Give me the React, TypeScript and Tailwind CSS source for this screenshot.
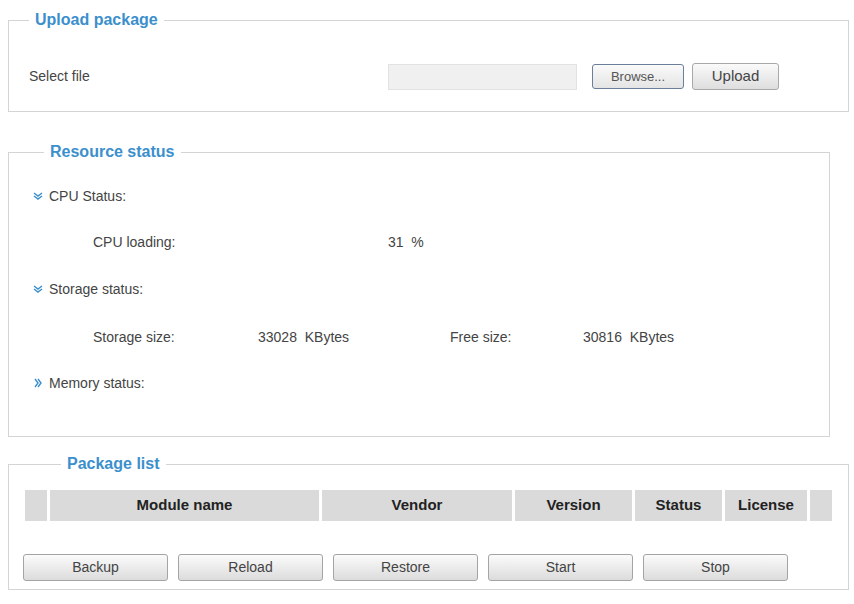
import React from 'react';

const BTNS = ['Backup', 'Reload', 'Restore', 'Start', 'Stop'];

const Legend = ({ children, ml }: { children: React.ReactNode; ml: string }) => (
  <legend className={`${ml} px-[6px] text-[16px] font-bold text-[#3b8fcc]`}>{children}</legend>
);

const Chevron = ({ open }: { open: boolean }) => (
  <svg width="10" height="10" viewBox="0 0 10 10" className="mr-[6px]">
    {open ? (
      <path d="M1 2l4 3 4-3M1 5l4 3 4-3" fill="none" stroke="#3b8fcc" strokeWidth="1.4" />
    ) : (
      <path d="M2 1l3 4-3 4M5 1l3 4-3 4" fill="none" stroke="#3b8fcc" strokeWidth="1.4" />
    )}
  </svg>
);

export default function App() {
  return (
    <div className="w-[854px] h-[604px] bg-white text-[14px] text-[#444] px-[8px] pt-[8px]" style={{ fontFamily: '"Liberation Sans", Arial, sans-serif' }}>
      {/* Upload package */}
      <fieldset className="border border-[#d4d4d4] h-[104px] w-[841px] px-[20px]">
        <Legend ml="ml-0">Upload package</Legend>
        <div className="flex items-center mt-[31px]">
          <span className="w-[359px]">Select file</span>
          <div className="w-[189px] h-[26px] bg-[#f0f0f0] border border-[#e2e2e2]" />
          <button className="ml-[15px] w-[92px] h-[25px] border border-[#6b7f9a] rounded-[3px] bg-gradient-to-b from-[#fafafa] to-[#e4e4e4] text-[13px] text-[#555]">Browse...</button>
          <button className="ml-[8px] w-[87px] h-[27px] border border-[#a8a8a8] rounded-[3px] bg-gradient-to-b from-[#fafafa] to-[#dedede] text-[15px] text-[#444]">Upload</button>
        </div>
      </fieldset>

      {/* Resource status */}
      <fieldset className="mt-[28px] border border-[#d4d4d4] h-[297px] w-[822px] px-[16px]">
        <Legend ml="ml-[19px]">Resource status</Legend>
        <div className="flex items-center mt-[22px] h-[20px] pl-[8px]"><Chevron open />CPU Status:</div>
        <div className="flex items-center mt-[26px] h-[20px] pl-[68px]">
          <span className="w-[295px]">CPU loading:</span>
          <span>31&nbsp;&nbsp;%</span>
        </div>
        <div className="flex items-center mt-[27px] h-[20px] pl-[8px]"><Chevron open />Storage status:</div>
        <div className="flex items-center mt-[28px] h-[20px] pl-[68px]">
          <span className="w-[165px]">Storage size:</span>
          <span className="w-[192px]">33028&nbsp;&nbsp;KBytes</span>
          <span className="w-[133px]">Free size:</span>
          <span>30816&nbsp;&nbsp;KBytes</span>
        </div>
        <div className="flex items-center mt-[26px] h-[20px] pl-[8px]"><Chevron open={false} />Memory status:</div>
      </fieldset>

      {/* Package list */}
      <fieldset className="mt-[15px] border border-[#d4d4d4] h-[138px] w-[841px] px-[16px]">
        <Legend ml="ml-[36px]">Package list</Legend>
        <div className="flex gap-[3px] mt-[14px] h-[31px] text-[15px] font-bold text-[#222]">
          {[
            ['', 22], ['Module name', 269], ['Vendor', 190], ['Version', 117], ['Status', 87], ['License', 82], ['', 22],
          ].map(([l, w], i) => (
            <div key={i} className="bg-[#dadada] flex items-center justify-center" style={{ width: w as number }}>{l}</div>
          ))}
        </div>
        <div className="flex gap-[10px] mt-[33px] -ml-[2px]">
          {BTNS.map((b) => (
            <button key={b} className="w-[145px] h-[27px] border border-[#a4a4a4] rounded-[3px] bg-gradient-to-b from-[#fbfbfb] to-[#dcdcdc] text-[14px] text-[#444]">{b}</button>
          ))}
        </div>
      </fieldset>
    </div>
  );
}
